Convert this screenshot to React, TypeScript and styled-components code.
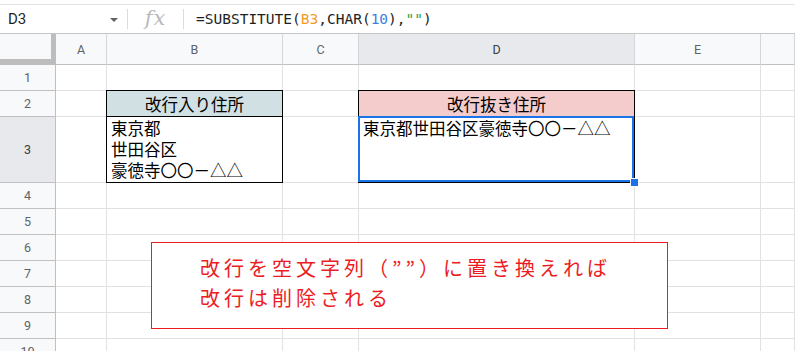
import React from "react";
import styled, { createGlobalStyle } from "styled-components";

const Global = createGlobalStyle`
  html, body { margin: 0; padding: 0; background: #ffffff; }
  body { width: 795px; height: 351px; overflow: hidden; font-family: Roboto, "Noto Sans", sans-serif; }
  * { box-sizing: border-box; }
`;

const Page = styled.div`
  position: relative;
  width: 795px;
  height: 351px;
  overflow: hidden;
  padding-top: 4px;
`;

const FormulaBar = styled.div`
  display: flex;
  align-items: center;
  height: 30px;
  border-top: 1px solid #e1e3e1;
  border-bottom: 1px solid #c4c7c5;
  background: #ffffff;
`;

const NameBox = styled.div`
  display: flex;
  align-items: center;
  justify-content: space-between;
  width: 127px;
  height: 100%;
  padding: 0 9px 0 8px;
  font-family: Roboto, "Liberation Sans", sans-serif;
  font-size: 15px;
  color: #1f1f1f;
`;

const Caret = styled.span`
  width: 0;
  height: 0;
  border-left: 4.5px solid transparent;
  border-right: 4.5px solid transparent;
  border-top: 4.5px solid #5f6368;
  margin-top: 2px;
`;

const Divider = styled.span`
  width: 1px;
  height: 20px;
  background: #dadce0;
`;

const FxLabel = styled.div`
  width: 55px;
  text-align: center;
  font-family: "DejaVu Serif", "Liberation Serif", serif;
  font-style: italic;
  font-size: 21px;
  color: #b9babb;
  padding-bottom: 3px;
  letter-spacing: 1px;
`;

const Formula = styled.div`
  padding-left: 12px;
  font-family: "DejaVu Sans Mono", "Liberation Mono", monospace;
  font-size: 14.5px;
  color: #1f1f1f;
  white-space: pre;
`;

const Tok = styled.span<{ $c: string }>`
  color: ${(p) => p.$c};
`;

const Sheet = styled.div`
  display: grid;
  grid-template-columns: 56px 51px 176px 76px 276px 126px 1fr;
  grid-template-rows: 31px 26px 26px 66px repeat(7, 26px);
`;

const Corner = styled.div`
  background: #f8f9fa;
  border-right: 5px solid #bdbdbd;
  border-bottom: 6px solid #bdbdbd;
`;

const ColHead = styled.div<{ $sel?: boolean }>`
  display: flex;
  align-items: center;
  justify-content: center;
  background: ${(p) => (p.$sel ? "#e7e9ec" : "#f8f9fa")};
  border-right: 1px solid #d4d6d8;
  border-bottom: 1px solid #c0c0c0;
  font-family: Roboto, "Liberation Sans", sans-serif;
  font-size: 12.5px;
  color: ${(p) => (p.$sel ? "#3c4043" : "#5f6368")};
  padding-top: 1px;
`;

const RowHead = styled.div<{ $sel?: boolean }>`
  display: flex;
  align-items: center;
  justify-content: center;
  background: ${(p) => (p.$sel ? "#e7e9ec" : "#f8f9fa")};
  border-right: 1px solid #c0c0c0;
  border-bottom: 1px solid #c0c0c0;
  font-family: Roboto, "Liberation Sans", sans-serif;
  font-size: 12.5px;
  color: ${(p) => (p.$sel ? "#3c4043" : "#5f6368")};
`;

const Cell = styled.div<{ $bg?: string; $boxed?: boolean }>`
  position: relative;
  background: ${(p) => p.$bg || "#ffffff"};
  border-right: 1px solid ${(p) => (p.$boxed ? "#000000" : "#e1e1e1")};
  border-bottom: 1px solid ${(p) => (p.$boxed ? "#000000" : "#e1e1e1")};
  box-shadow: ${(p) =>
    p.$boxed ? "-1px 0 0 #000000, 0 -1px 0 #000000, -1px -1px 0 #000000" : "none"};
  font-family: "Noto Sans CJK JP", "Noto Sans", sans-serif;
  font-size: 16.5px;
  color: #000000;
`;

const TitleText = styled.div`
  height: 100%;
  display: flex;
  align-items: center;
  justify-content: center;
  line-height: 1;
  padding-top: 1px;
`;

const BodyText = styled.div`
  padding: 1px 0 0 4px;
  line-height: 21px;
  white-space: pre;
`;

const Selection = styled.div`
  position: absolute;
  z-index: 2;
  left: -1px;
  top: -1px;
  right: 0;
  bottom: 0;
  border: 2px solid #1a73e8;
  pointer-events: none;
`;

const FillHandle = styled.div`
  position: absolute;
  z-index: 3;
  right: -5px;
  bottom: -5px;
  width: 9px;
  height: 9px;
  background: #1a73e8;
  border: 1px solid #ffffff;
`;

const Callout = styled.div`
  position: absolute;
  z-index: 4;
  left: 151px;
  top: 242px;
  width: 517px;
  height: 87px;
  border: 1px solid #ec1c24;
  background: #ffffff;
  padding: 10px 0 0 48px;
  font-family: "Noto Sans CJK JP", "Noto Sans", sans-serif;
  font-size: 20px;
  line-height: 30px;
  letter-spacing: 4px;
  color: #ec1c24;
  white-space: pre;
`;

const COLS = ["A", "B", "C", "D", "E", ""];
const ROWS = [1, 2, 3, 4, 5, 6, 7, 8, 9, 10];

function renderCell(row: number, col: number) {
  const key = `${row}-${col}`;
  if (row === 2 && col === 1) {
    return (
      <Cell key={key} $bg="#d0e0e3" $boxed>
        <TitleText>改行入り住所</TitleText>
      </Cell>
    );
  }
  if (row === 3 && col === 1) {
    return (
      <Cell key={key} $boxed>
        <BodyText>{"東京都\n世田谷区\n豪徳寺〇〇－△△"}</BodyText>
      </Cell>
    );
  }
  if (row === 2 && col === 3) {
    return (
      <Cell key={key} $bg="#f4cccc" $boxed>
        <TitleText>改行抜き住所</TitleText>
      </Cell>
    );
  }
  if (row === 3 && col === 3) {
    return (
      <Cell key={key} $boxed>
        <BodyText>東京都世田谷区豪徳寺〇〇－△△</BodyText>
        <Selection />
        <FillHandle />
      </Cell>
    );
  }
  return <Cell key={key} />;
}

export default function App() {
  return (
    <Page>
      <Global />
      <FormulaBar>
        <NameBox>
          <span>D3</span>
          <Caret />
        </NameBox>
        <Divider />
        <FxLabel>fx</FxLabel>
        <Divider />
        <Formula>
          =SUBSTITUTE(<Tok $c="#f29b1f">B3</Tok>,CHAR(<Tok $c="#3d7fe0">10</Tok>),
          <Tok $c="#2f9e44">""</Tok>)
        </Formula>
      </FormulaBar>
      <Sheet>
        <Corner />
        {COLS.map((c, i) => (
          <ColHead key={`h${i}`} $sel={c === "D"}>
            {c}
          </ColHead>
        ))}
        {ROWS.map((r) => (
          <React.Fragment key={`r${r}`}>
            <RowHead $sel={r === 3}>{r}</RowHead>
            {COLS.map((_, ci) => renderCell(r, ci))}
          </React.Fragment>
        ))}
      </Sheet>
      <Callout>{"改行を空文字列（””）に置き換えれば\n改行は削除される"}</Callout>
    </Page>
  );
}
